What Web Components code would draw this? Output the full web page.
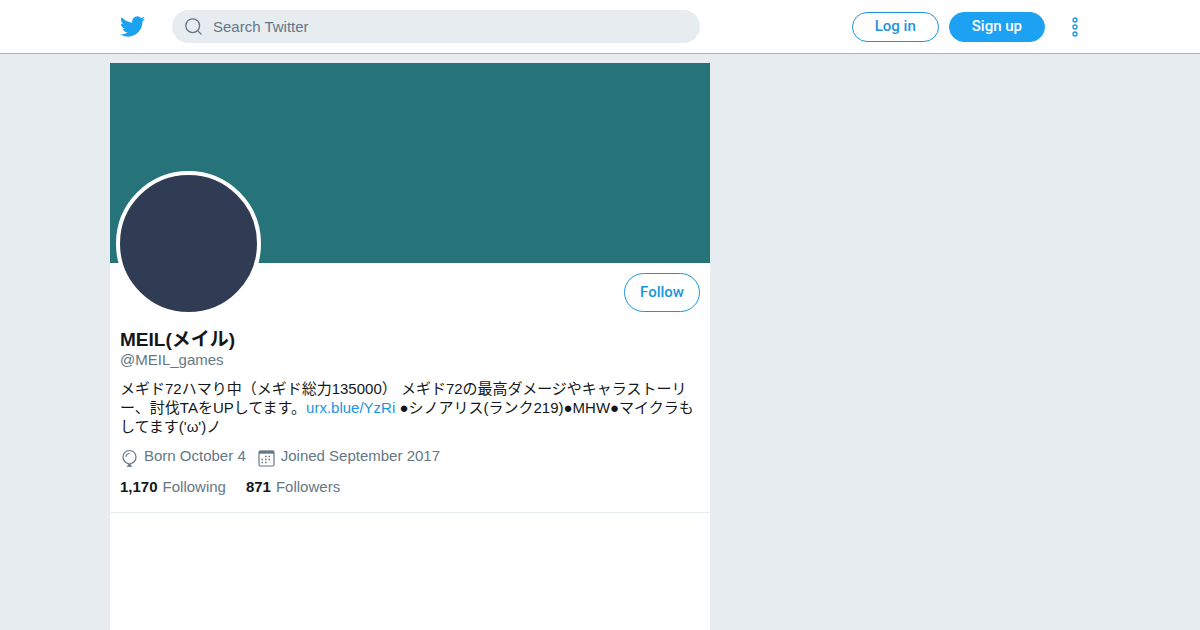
<!DOCTYPE html>
<html lang="ja">
<head>
<meta charset="utf-8">
<meta name="viewport" content="width=device-width, initial-scale=1">
<title>MEIL(メイル)</title>
<style>
  html { height: 100%; }
  body {
    margin: 0;
    min-height: 100%;
    display: flex;
    background: #e6ecf0;
    color: #14171a;
    font: 15px/19px "Liberation Sans", "Noto Sans CJK JP", sans-serif;
    --blue: #1da1f2;
    --link: #1b95e0;
    --muted: #657786;
  }
</style>
</head>
<body>
<profile-page></profile-page>

<script>
const define = (name, markup) => {
  const template = document.createElement('template');
  template.innerHTML = markup;
  customElements.define(name, class extends HTMLElement {
    constructor() {
      super();
      this.attachShadow({ mode: 'open' }).append(template.content.cloneNode(true));
    }
  });
};

define('pill-button', `
  <style>
    :host { display: inline-flex; }
    button {
      box-sizing: border-box;
      height: var(--pill-height, 30px);
      padding: 0 var(--pill-pad, 22px) 2px;
      border: 1px solid var(--link);
      border-radius: 20px;
      background: var(--pill-fill, #fff);
      color: var(--pill-ink, var(--link));
      font: 500 15px/18px Roboto, "Liberation Sans", sans-serif;
      white-space: nowrap;
      cursor: pointer;
    }
    :host([filled]) button { border-color: var(--blue); }
    :host([filled]) { --pill-fill: var(--blue); --pill-ink: #fff; }
    :host([large]) { --pill-height: 39px; --pill-pad: 15px; }
  </style>
  <button type="button"><slot></slot></button>`);

define('search-box', `
  <style>
    :host { display: block; }
    label {
      display: flex;
      align-items: center;
      gap: 10px;
      height: 33px;
      padding: 0 12px;
      border-radius: 17px;
      background: #e6ecf0;
    }
    svg { width: 19px; height: 19px; flex: none; }
    input {
      flex: 1;
      min-width: 0;
      padding: 0;
      border: 0;
      outline: 0;
      background: none;
      color: inherit;
      font: inherit;
    }
    input::placeholder { color: var(--muted); opacity: 1; }
  </style>
  <label>
    <svg viewBox="0 0 19 19" fill="none" stroke="#657786" stroke-width="1.3" stroke-linecap="round" aria-hidden="true">
      <circle cx="8.7" cy="8.7" r="6.9"/><path d="M13.600 13.600 17 17"/>
    </svg>
    <input type="search" placeholder="Search Twitter" aria-label="Search Twitter">
  </label>`);

define('site-header', `
  <style>
    :host { display: block; background: #fff; border-bottom: 1px solid #aab2b8; }
    header {
      box-sizing: border-box;
      display: flex;
      align-items: center;
      width: 100%;
      max-width: 980px;
      height: 53px;
      margin: 0 auto;
      padding: 0 5px 0 10px;
    }
    .logo { display: flex; margin-right: 27px; }
    .logo svg { width: 25px; height: 25px; }
    search-box { flex: 0 1 528px; }
    nav { display: flex; align-items: center; gap: 10px; margin-left: auto; }
    .more { display: flex; padding: 0 0 0 10px; border: 0; background: none; cursor: pointer; }
    .more svg { width: 20px; height: 22px; }
  </style>
  <header>
    <a class="logo" href="#" aria-label="Twitter">
      <svg viewBox="0 0 24 24" fill="#1da1f2" aria-hidden="true"><path d="M23.954 4.569a10 10 0 0 1-2.825.775 4.958 4.958 0 0 0 2.163-2.723c-.951.555-2.005.959-3.127 1.184a4.92 4.92 0 0 0-8.384 4.482C7.691 8.094 4.066 6.13 1.64 3.161a4.822 4.822 0 0 0-.666 2.475c0 1.71.87 3.213 2.188 4.096a4.904 4.904 0 0 1-2.228-.616v.061a4.923 4.923 0 0 0 3.946 4.827 4.996 4.996 0 0 1-2.212.085 4.937 4.937 0 0 0 4.604 3.417 9.868 9.868 0 0 1-6.102 2.105c-.39 0-.779-.023-1.17-.067a13.995 13.995 0 0 0 7.557 2.209c9.054 0 13.999-7.496 13.999-13.986 0-.209 0-.42-.015-.63a9.936 9.936 0 0 0 2.46-2.548z"/></svg>
    </a>
    <search-box></search-box>
    <nav>
      <pill-button>Log in</pill-button>
      <pill-button filled>Sign up</pill-button>
      <button class="more" type="button" aria-label="More">
        <svg viewBox="0 0 20 22" fill="none" stroke="#1b95e0" stroke-width="1.3" aria-hidden="true">
          <circle cx="10" cy="4" r="2"/><circle cx="10" cy="11" r="2"/><circle cx="10" cy="18" r="2"/>
        </svg>
      </button>
    </nav>
  </header>`);

define('profile-fact', `
  <style>
    :host { display: flex; gap: 5px; color: var(--muted); }
    ::slotted(svg) { width: 19px; height: 22px; flex: none; }
  </style>
  <slot name="icon"></slot><span><slot></slot></span>`);

define('profile-stat', `
  <style>
    :host { display: block; color: var(--muted); }
    a { color: inherit; text-decoration: none; }
    b { color: #14171a; margin-right: 5px; }
  </style>
  <a href="#"><b><slot name="count"></slot></b><slot></slot></a>`);

define('profile-card', `
  <style>
    :host { display: block; background: #fff; }
    .banner { aspect-ratio: 3 / 1; background: #26747a; }
    .info { padding: 10px 10px 16px; border-bottom: 1px solid #e6ecf0; }
    .top { display: flex; justify-content: space-between; align-items: flex-start; height: 57px; }
    .avatar {
      width: 137px;
      height: 137px;
      margin: -102px 0 0 -4px;
      border: 4px solid #fff;
      border-radius: 50%;
      background: #2f3c53;
    }
    h1 { margin: 0; font-size: 19px; line-height: 20px; }
    p { margin: 0; }
    .handle { line-height: 20px; color: var(--muted); }
    .bio { margin: 9px 0 10px; line-break: anywhere; }
    .bio a { display: inline-block; color: var(--link); text-decoration: none; }
    .facts { display: flex; flex-wrap: wrap; column-gap: 11px; }
    .stats { display: flex; gap: 20px; margin-top: 9px; }
  </style>
  <div class="banner"></div>
  <section class="info">
    <div class="top">
      <div class="avatar" role="img" aria-label="MEIL"></div>
      <pill-button large>Follow</pill-button>
    </div>
    <h1>MEIL(メイル)</h1>
    <p class="handle">@MEIL_games</p>
    <p class="bio">メギド72ハマり中（メギド総力135000） メギド72の最高ダメージやキャラストーリー、討伐TAをUPしてます。<a href="#">urx.blue/YzRi</a> ●シノアリス(ランク219)●MHW●マイクラもしてます('ω')ノ</p>
    <div class="facts">
      <profile-fact>
        <svg slot="icon" viewBox="0 -1 19 22" fill="none" stroke="#657786" stroke-width="1.2" stroke-linecap="round" aria-hidden="true">
          <path d="M9.500 17.200C5.500 16 3 13.200 3 10a6.500 6.500 0 0 1 13 0c0 3.200-2.500 6-6.500 7.200z"/>
          <path d="M6 9.500A3.500 3.500 0 0 1 9 6.500"/><path d="M9.500 17.200 7.800 19.200h3.400z" fill="#657786"/>
        </svg>
        Born October 4
      </profile-fact>
      <profile-fact>
        <svg slot="icon" viewBox="0 -1 19 22" fill="none" stroke="#657786" stroke-width="1.2" aria-hidden="true">
          <rect x="2" y="4" width="15" height="15" rx="1.5"/>
          <path d="M2 5.200h15" stroke-width="3"/>
          <path d="M8 9.500h7M4.500 12.500h10.500M4.500 15.500h7" stroke-width="1.600" stroke-dasharray="1.600 1.900"/>
        </svg>
        Joined September 2017
      </profile-fact>
    </div>
    <div class="stats">
      <profile-stat><span slot="count">1,170</span>Following</profile-stat>
      <profile-stat><span slot="count">871</span>Followers</profile-stat>
    </div>
  </section>`);

define('profile-page', `
  <style>
    :host { display: flex; flex-direction: column; flex: 1; min-width: 0; }
    main {
      display: flex;
      flex: 1;
      box-sizing: border-box;
      width: 100%;
      max-width: 980px;
      margin: 0 auto;
      padding-top: 9px;
    }
    profile-card { flex: 0 1 600px; min-width: 0; }
  </style>
  <site-header></site-header>
  <main><profile-card></profile-card></main>`);
</script>
</body>
</html>
